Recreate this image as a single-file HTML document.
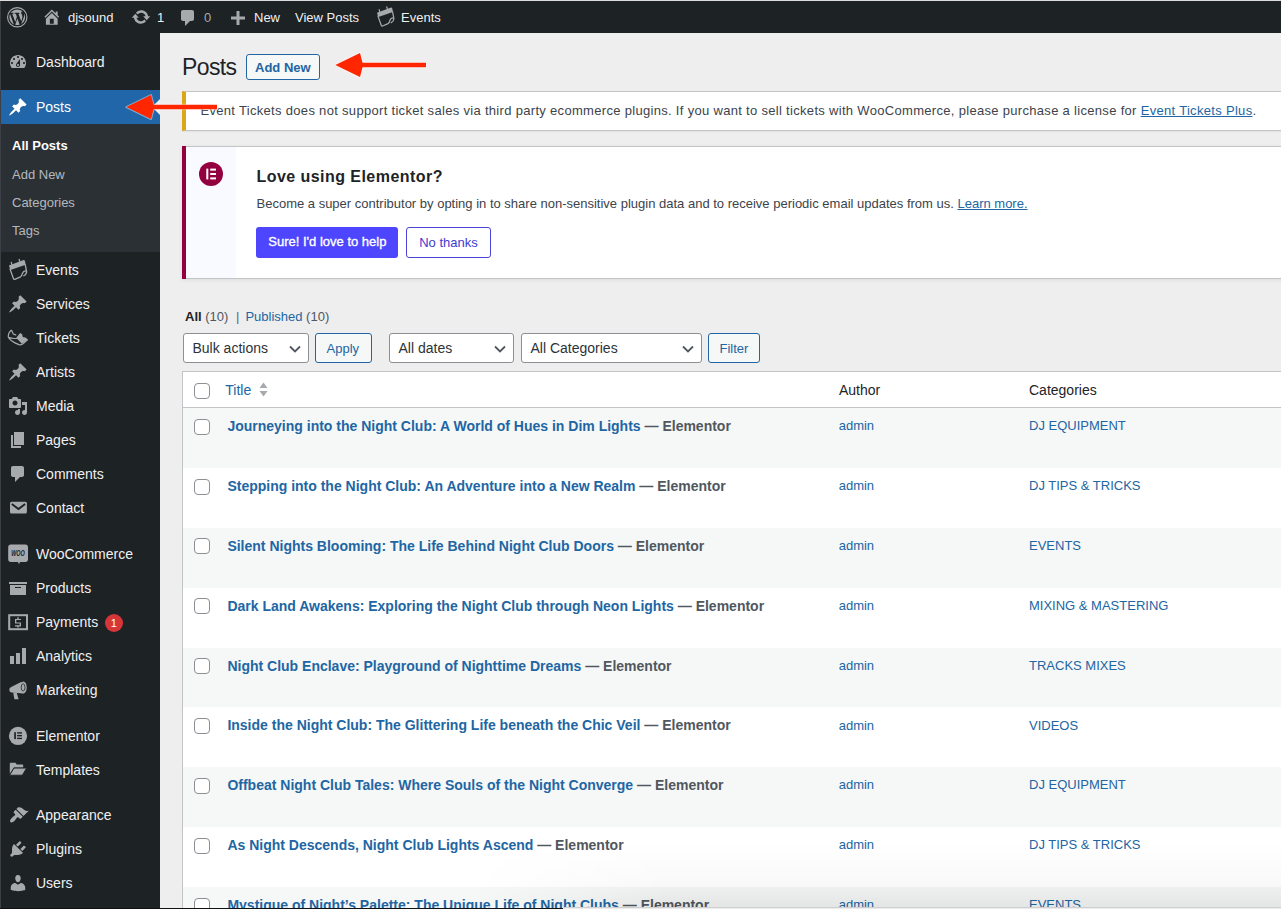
<!DOCTYPE html>
<html><head><meta charset="utf-8"><style>
*{box-sizing:border-box;margin:0;padding:0}
html,body{width:1281px;height:909px;overflow:hidden;background:#eeeeef;font-family:"Liberation Sans",sans-serif;color:#3c434a;font-size:13px;position:relative}
.t{position:absolute;white-space:nowrap}
.b{position:absolute}
svg{position:absolute;overflow:visible}
</style></head><body>
<div class="b" style="left:0;top:0;width:1281px;height:1px;background:#dcdcdc"></div>
<div class="b" style="left:0;top:1px;width:1281px;height:32px;background:#1d2225"></div>
<div class="b" style="left:0;top:33px;width:160px;height:876px;background:#1d2225"></div>
<svg style="left:6.75px;top:6.75px" width="20.5" height="20.5" viewBox="0 0 20 20"><circle cx="10" cy="10" r="9.45" fill="none" stroke="#a7aaad" stroke-width="1.1"/><g transform="translate(10 10) scale(0.86) translate(-10 -10)"><path fill="#a7aaad" d="M7.78 15.37L4.37 6.22c.55-.02 1.17-.08 1.17-.08.5-.06.44-1.13-.06-1.11 0 0-1.45.11-2.37.11-.18 0-.37 0-.58-.01C4.120 2.69 6.87 1.11 10 1.11c2.33 0 4.45.87 6.05 2.34-.68-.11-1.65.39-1.65 1.58 0 .74.45 1.360.9 2.1.35.61.55 1.36.55 2.46 0 1.49-1.4 5-1.4 5l-3.03-8.37c.54-.02.82-.17.82-.17.5-.05.44-1.25-.06-1.22 0 0-1.44.12-2.38.12-.87 0-2.33-.12-2.33-.12-.5-.03-.56 1.2-.06 1.22l.92.08 1.26 3.41zM17.41 10c.24-.64.74-1.87.43-4.25.7 1.29 1.05 2.71 1.05 4.25 0 3.29-1.73 6.24-4.4 7.78.97-2.59 1.94-5.2 2.92-7.780zM6.1 18.09C3.12 16.65 1.11 13.53 1.11 10c0-1.3.23-2.48.72-3.59C3.25 10.3 4.67 14.2 6.1 18.09zm4.03-6.63l2.58 6.98c-.86.29-1.76.45-2.71.45-.79 0-1.57-.11-2.29-.33.81-2.38 1.62-4.74 2.42-7.1z"/></g></svg>
<svg style="left:42.3px;top:7.4px" width="19.6" height="19.6" viewBox="0 0 20 20"><path fill="#a7aaad" d="M16 8.5l1.53 1.53-1.06 1.06L10 4.62l-6.47 6.47-1.06-1.06L10 2.5l4 4v-2h2v4zm-6-2.46l6 5.99V18H4v-5.97zM12 17v-5H8v5h4z"/></svg>
<div class="t" style="left:68px;top:9.00px;font-size:13px;line-height:17px;color:#f0f0f1;">djsound</div>

<svg style="left:131.3px;top:6.6px" width="20" height="20" viewBox="0 0 20 20"><path fill="#a7aaad" d="M10.2 3.28c3.53 0 6.43 2.61 6.92 6h2.08l-3.5 4-3.5-4h2.32c-.45-1.97-2.21-3.45-4.32-3.45-1.45 0-2.73.71-3.54 1.78L4.95 5.66C6.23 4.2 8.11 3.28 10.2 3.28zm-.4 13.44c-3.52 0-6.43-2.61-6.92-6H.8l3.5-4c1.17 1.33 2.33 2.67 3.5 4H5.48c.45 1.97 2.21 3.45 4.32 3.45 1.45 0 2.73-.71 3.54-1.78l1.71 1.95c-1.28 1.46-3.15 2.380-5.25 2.38z"/></svg>
<div class="t" style="left:157px;top:9.00px;font-size:13px;line-height:17px;color:#f0f0f1;">1</div>

<svg style="left:177.9px;top:7.9px" width="20" height="20" viewBox="0 0 20 20"><path fill="#a7aaad" d="M5 2h9c1.1 0 2 .9 2 2v7c0 1.1-.9 2-2 2h-2l-5 5v-5H5c-1.1 0-2-.9-2-2V4c0-1.1.9-2 2-2z"/></svg>
<div class="t" style="left:204px;top:9.00px;font-size:13px;line-height:17px;color:#a7aaad;">0</div>

<svg style="left:231px;top:10.5px" width="14" height="14" viewBox="0 0 14 14"><path fill="#a7aaad" d="M5.5 0h3v5.5H14v3H8.5V14h-3V8.5H0v-3h5.5z"/></svg>
<div class="t" style="left:254px;top:9.00px;font-size:13px;line-height:17px;color:#f0f0f1;">New</div>

<div class="t" style="left:295px;top:9.00px;font-size:13px;line-height:17px;color:#f0f0f1;">View Posts</div>

<svg style="left:371.5px;top:1.5px" width="30" height="30" viewBox="0 0 30 30"><g transform="translate(0.2 -0.3) scale(0.96)"><path fill="#a7aaad" d="M5 11.4L19 6.2Q20.6 5.7 21 7.3L21.6 10.8 6.4 15.9Z"/><path fill="none" stroke="#a7aaad" stroke-width="1.3" stroke-linecap="round" d="M6 15L9.6 25Q10 25.7 10.8 25.3L16.5 22.8Q18 22 18.5 19.2Q19.3 17 21.6 16.8M21.2 10.5L22.6 17.5Q22.6 20.2 19.8 21.8M7.3 8.3L7.8 10.3M15.2 5.3L15.7 7.3"/></g></svg>
<div class="t" style="left:401px;top:9.00px;font-size:13px;line-height:17px;color:#f0f0f1;">Events</div>

<div class="b" style="left:0;top:90px;width:160px;height:34px;background:#2166a8"></div>
<div class="b" style="left:0;top:124px;width:160px;height:128px;background:#2b3034"></div>
<svg style="left:8px;top:51.599999999999994px;fill:#a7aaad" width="20" height="20" viewBox="0 0 20 20"><path fill-rule="evenodd" d="M3.76 16h12.48c1.1-1.37 1.76-3.11 1.76-5 0-4.42-3.58-8-8-8s-8 3.58-8 8c0 1.89.66 3.630 1.76 5zM10 4c.55 0 1 .45 1 1s-.45 1-1 1-1-.45-1-1 .45-1 1-1zM6 6c.55 0 1 .45 1 1s-.45 1-1 1-1-.45-1-1 .45-1 1-1zm8 0c.55 0 1 .45 1 1s-.45 1-1 1-1-.45-1-1 .45-1 1-1zm-5.37 5.55L12 7v6c0 1.1-.9 2-2 2s-2-.9-2-2c0-.57.24-1.08.63-1.45zM4 10c.55 0 1 .45 1 1s-.45 1-1 1-1-.45-1-1 .45-1 1-1zm12 0c.55 0 1 .45 1 1s-.45 1-1 1-1-.45-1-1 .45-1 1-1zm-5 3c0-.55-.45-1-1-1s-1 .45-1 1 .45 1 1 1 1-.45 1-1z"/></svg>
<div class="t" style="left:36px;top:53.45px;font-size:14px;line-height:18px;color:#f0f0f1;">Dashboard</div>

<svg style="left:8px;top:96.9px;fill:#fff" width="20" height="20" viewBox="0 0 20 20"><path d="M10.44 3.02l1.82-1.82 6.36 6.35-1.83 1.82c-1.05-.68-2.48-.57-3.41.36l-.75.75c-.92.93-1.040 2.35-.35 3.41l-1.83 1.82-2.41-2.41-2.8 2.79c-.42.42-3.38 2.71-3.8 2.29s1.86-3.39 2.28-3.81l2.79-2.79L4.1 9.36l1.83-1.82c1.05.69 2.48.57 3.4-.36l.75-.75c.93-.92 1.05-2.35.36-3.41z"/></svg>
<div class="t" style="left:36px;top:98.05px;font-size:14px;line-height:18px;color:#fff;">Posts</div>

<svg style="left:4px;top:254px" width="30" height="30" viewBox="0 0 30 30"><path fill="#a7aaad" d="M5 11.4L19 6.2Q20.6 5.7 21 7.3L21.6 10.8 6.4 15.9Z"/><path fill="none" stroke="#a7aaad" stroke-width="1.3" stroke-linecap="round" d="M6 15L9.6 25Q10 25.7 10.8 25.3L16.5 22.8Q18 22 18.5 19.2Q19.3 17 21.6 16.8M21.2 10.5L22.6 17.5Q22.6 20.2 19.8 21.8M7.3 8.3L7.8 10.3M15.2 5.3L15.7 7.3"/></svg>
<div class="t" style="left:36px;top:261.15px;font-size:14px;line-height:18px;color:#f0f0f1;">Events</div>

<svg style="left:8px;top:293.5px;fill:#a7aaad" width="20" height="20" viewBox="0 0 20 20"><path d="M10.44 3.02l1.82-1.82 6.36 6.35-1.83 1.82c-1.05-.68-2.48-.57-3.41.36l-.75.75c-.92.93-1.040 2.35-.35 3.41l-1.83 1.82-2.41-2.41-2.8 2.79c-.42.42-3.38 2.71-3.8 2.29s1.86-3.39 2.28-3.81l2.79-2.79L4.1 9.36l1.83-1.82c1.05.69 2.48.57 3.4-.36l.75-.75c.93-.92 1.05-2.35.36-3.41z"/></svg>
<div class="t" style="left:36px;top:294.65px;font-size:14px;line-height:18px;color:#f0f0f1;">Services</div>

<svg style="left:4px;top:324px" width="30" height="30" viewBox="0 0 30 30"><path fill="none" stroke="#a7aaad" stroke-width="1.2" stroke-linejoin="round" d="M7.4 6Q4 9 4.3 13Q6 17.2 15 20.6Q17.4 21.2 19 19.8L23.7 15.5M4.6 13.4Q9 15 12.6 14.3L16.6 9.4M7.4 6L9.3 10Q10.8 10.8 12.2 10.9"/><path fill="#a7aaad" d="M12.6 14.3L16.6 9.2L18.4 10.5Q18 12.8 19.3 13.2Q20.8 13 21.5 13.6L23.8 15.5L17.8 19.8Z"/></svg>
<div class="t" style="left:36px;top:329.15px;font-size:14px;line-height:18px;color:#f0f0f1;">Tickets</div>

<svg style="left:8px;top:362px;fill:#a7aaad" width="20" height="20" viewBox="0 0 20 20"><path d="M10.44 3.02l1.82-1.82 6.36 6.35-1.83 1.82c-1.05-.68-2.48-.57-3.41.36l-.75.75c-.92.93-1.040 2.35-.35 3.41l-1.83 1.82-2.41-2.41-2.8 2.79c-.42.42-3.38 2.71-3.8 2.29s1.86-3.39 2.28-3.81l2.79-2.79L4.1 9.36l1.83-1.82c1.05.69 2.48.57 3.4-.36l.75-.75c.93-.92 1.05-2.35.36-3.41z"/></svg>
<div class="t" style="left:36px;top:363.15px;font-size:14px;line-height:18px;color:#f0f0f1;">Artists</div>

<svg style="left:8px;top:395.8px;fill:#a7aaad" width="20" height="20" viewBox="0 0 20 20"><path d="M13 11V4c0-.55-.45-1-1-1h-1.67L9 1H5L3.67 3H2c-.55 0-1 .45-1 1v7c0 .55.45 1 1 1h10c.55 0 1-.45 1-1zM7 4.5c1.38 0 2.5 1.12 2.5 2.5S8.38 9.5 7 9.5 4.5 8.38 4.5 7 5.62 4.5 7 4.5zM14 6h5v10.5c0 1.38-1.12 2.5-2.5 2.5S14 17.88 14 16.5s1.12-2.5 2.5-2.5c.17 0 .34.02.5.05V9h-3V6zm-4 8.05V13h2v3.5c0 1.38-1.12 2.5-2.5 2.5S7 17.88 7 16.5 8.12 14 9.5 14c.17 0 .34.02.5.05z"/></svg>
<div class="t" style="left:36px;top:397.15px;font-size:14px;line-height:18px;color:#f0f0f1;">Media</div>

<svg style="left:7.8px;top:429.8px;fill:#a7aaad" width="20" height="20" viewBox="0 0 20 20"><path d="M6 15V2h10v13H6zm-1 1h8v2H3V5h2v11z"/></svg>
<div class="t" style="left:36px;top:431.15px;font-size:14px;line-height:18px;color:#f0f0f1;">Pages</div>

<svg style="left:8.1px;top:463.8px;fill:#a7aaad" width="20" height="20" viewBox="0 0 20 20"><path d="M5 2h9c1.1 0 2 .9 2 2v7c0 1.1-.9 2-2 2h-2l-5 5v-5H5c-1.1 0-2-.9-2-2V4c0-1.1.9-2 2-2z"/></svg>
<div class="t" style="left:36px;top:465.15px;font-size:14px;line-height:18px;color:#f0f0f1;">Comments</div>

<svg style="left:8px;top:498.29999999999995px" width="20" height="20" viewBox="0 0 20 20"><rect x="2" y="3.7" width="16.9" height="11.9" rx="1.6" fill="#a7aaad"/><path d="M3.8 6L10.5 11.1 17.1 6" stroke="#1d2225" stroke-width="1.9" fill="none"/></svg>
<div class="t" style="left:36px;top:499.45px;font-size:14px;line-height:18px;color:#f0f0f1;">Contact</div>

<svg style="left:8px;top:543.6px" width="20" height="20" viewBox="0 0 20 20"><path fill="#a7aaad" d="M2.7 .4h14.8c1.4 0 2.5 1.1 2.5 2.5v12.6c0 1.4-1.1 2.5-2.5 2.5h-5.4l-1.1 2.2-1-2.2H2.7C1.3 18 .2 16.9.2 15.5V2.9C.2 1.5 1.3.4 2.7.4z"/><text x="10" y="12" font-family="Liberation Sans" font-size="8.6" font-weight="bold" font-style="italic" textLength="13.6" lengthAdjust="spacingAndGlyphs" text-anchor="middle" fill="#1d2225">WOO</text></svg>
<div class="t" style="left:36px;top:544.75px;font-size:14px;line-height:18px;color:#f0f0f1;">WooCommerce</div>

<svg style="left:8px;top:578.0px;fill:#a7aaad" width="20" height="20" viewBox="0 0 20 20"><path d="M19 4v2H1V4h18zM2 7h16v10H2V7zm11 3V9H7v1h6z"/></svg>
<div class="t" style="left:36px;top:578.85px;font-size:14px;line-height:18px;color:#f0f0f1;">Products</div>

<svg style="left:8px;top:611.6px" width="20" height="20" viewBox="0 0 20 20"><rect x="1.2" y="3.2" width="17.8" height="14" fill="none" stroke="#a7aaad" stroke-width="2"/><path fill="#a7aaad" d="M7 6.9h6v1.2H8.3v2.3H13v4H7v-1.2h4.7v-1.6H7zM9.3 5.3h1.4v1.6H9.3zM9.3 14.4h1.4v1.2H9.3z"/></svg>
<div class="t" style="left:36px;top:612.75px;font-size:14px;line-height:18px;color:#f0f0f1;">Payments</div>

<svg style="left:8px;top:645.7px;fill:#a7aaad" width="20" height="20" viewBox="0 0 20 20"><path d="M18 18V2h-4v16h4zm-6 0V7H8v11h4zm-6 0v-8H2v8h4z"/></svg>
<div class="t" style="left:36px;top:646.75px;font-size:14px;line-height:18px;color:#f0f0f1;">Analytics</div>

<svg style="left:8px;top:679.7px" width="20" height="20" viewBox="0 0 20 20"><path fill="#a7aaad" d="M1.3 9.8Q1.3 7.6 3.2 7L13.6 1.8 15.2 13.4 3.4 12.6Q1.3 12.2 1.3 9.8Z"/><ellipse cx="15.4" cy="7.5" rx="3.3" ry="6" fill="#a7aaad"/><ellipse cx="15.1" cy="7.4" rx="1.9" ry="3.6" fill="none" stroke="#1d2225" stroke-width=".8"/><ellipse cx="15.1" cy="7.4" rx=".9" ry="1.5" fill="#a7aaad"/><path fill="#a7aaad" d="M5.2 12.6L8.8 12.9 10.6 19.2 6.4 19.2Z"/></svg>
<div class="t" style="left:36px;top:680.85px;font-size:14px;line-height:18px;color:#f0f0f1;">Marketing</div>

<svg style="left:8px;top:725.7px" width="20" height="20" viewBox="0 0 20 20"><circle cx="10" cy="9.95" r="9.1" fill="#a7aaad"/><rect x="6.2" y="6.2" width="1.7" height="6.9" fill="#1d2225"/><rect x="9.1" y="6.2" width="4.9" height="1.4" fill="#1d2225"/><rect x="9.1" y="8.95" width="4.9" height="1.4" fill="#1d2225"/><rect x="9.1" y="11.7" width="4.9" height="1.4" fill="#1d2225"/></svg>
<div class="t" style="left:36px;top:726.85px;font-size:14px;line-height:18px;color:#f0f0f1;">Elementor</div>

<svg style="left:8px;top:760px" width="20" height="20" viewBox="0 0 20 20"><path fill="#a7aaad" d="M1.8 3.5Q1.8 2.7 2.6 2.7H7.5L8.7 4.4H14.4Q15.2 4.4 15.2 5.2V7.6H5.8L1.8 13.8Z"/><path fill="#a7aaad" stroke="#1d2225" stroke-width=".9" d="M6 8.1H18.6L14.3 15.2H1.6Z"/></svg>
<div class="t" style="left:36px;top:761.15px;font-size:14px;line-height:18px;color:#f0f0f1;">Templates</div>

<svg style="left:8.5px;top:804.6px;fill:#a7aaad" width="20" height="20" viewBox="0 0 20 20"><path d="M14.48 11.06L7.41 3.99l1.5-1.5c.5-.56 2.3-.47 3.51.32 1.21.8 1.43 1.28 2.91 2.1 1.18.64 2.45 1.26 4.45.85zm-.71.71L6.7 4.7 4.93 6.47c-.39.39-.39 1.02 0 1.41l1.06 1.06c.39.39.39 1.03 0 1.42-.6.6-1.43 1.110-2.21 1.69-.35.26-.7.53-1.01.84C1.43 14.23.4 16.080 1.4 17.070c.99 1 2.84-.03 4.18-1.36.31-.31.58-.66.85-1.02.57-.78 1.08-1.61 1.69-2.21.39-.39 1.02-.39 1.41 0l1.06 1.06c.39.39 1.02.39 1.41 0z"/></svg>
<div class="t" style="left:36px;top:805.75px;font-size:14px;line-height:18px;color:#f0f0f1;">Appearance</div>

<svg style="left:7.8px;top:838.7px;fill:#a7aaad" width="20" height="20" viewBox="0 0 20 20"><path d="M13.11 4.36L9.87 7.6 8 5.73l3.24-3.24c.35-.34 1.05-.2 1.56.32.52.51.66 1.21.31 1.55zm-8 1.77l.91-1.12 9.01 9.01-1.19.84c-.71.71-2.63 1.16-3.82 1.16H6.14L4.9 17.26c-.59.59-1.54.59-2.12 0-.59-.58-.59-1.53 0-2.12l1.24-1.240v-3.88c0-1.13.4-3.19 1.09-3.89zm7.26 3.97l3.24-3.24c.34-.35 1.04-.21 1.55.31.52.51.66 1.21.31 1.55l-3.24 3.25z"/></svg>
<div class="t" style="left:36px;top:839.75px;font-size:14px;line-height:18px;color:#f0f0f1;">Plugins</div>

<svg style="left:8px;top:872.7px;fill:#a7aaad" width="20" height="20" viewBox="0 0 20 20"><path d="M10 9.25c-2.27 0-2.73-3.44-2.73-3.44C7 4.02 7.820 2 9.97 2c2.16 0 2.98 2.020 2.71 3.81 0 0-.41 3.44-2.68 3.44zm0 2.57L12.72 10c2.39 0 4.52 2.33 4.52 4.53v2.49s-3.65 1.13-7.24 1.13c-3.65 0-7.24-1.13-7.24-1.130v-2.49c0-2.25 1.94-4.48 4.47-4.48z"/></svg>
<div class="t" style="left:36px;top:873.65px;font-size:14px;line-height:18px;color:#f0f0f1;">Users</div>

<div class="b" style="left:105px;top:614px;width:18px;height:18px;border-radius:9px;background:#d63638"></div>
<div class="t" style="left:110.8px;top:616.29px;font-size:11px;line-height:14px;color:#fff;">1</div>

<div class="t" style="left:12px;top:137.00px;font-size:13px;line-height:17px;color:#fff;font-weight:bold;">All Posts</div>

<div class="t" style="left:12px;top:166.00px;font-size:13px;line-height:17px;color:rgba(240,246,252,.7);">Add New</div>

<div class="t" style="left:12px;top:194.00px;font-size:13px;line-height:17px;color:rgba(240,246,252,.7);">Categories</div>

<div class="t" style="left:12px;top:222.00px;font-size:13px;line-height:17px;color:rgba(240,246,252,.7);">Tags</div>

<div class="t" style="left:182px;top:52.23px;font-size:23px;line-height:30px;color:#1d2327;letter-spacing:-0.6px;">Posts</div>

<div class="b" style="left:246px;top:54px;width:74px;height:26px;border:1px solid #2166a3;border-radius:3px;background:#f6f7f7"></div>
<div class="t" style="left:255px;top:58.90px;font-size:13px;line-height:17px;color:#2166a3;font-weight:bold;">Add New</div>

<div class="b" style="left:182px;top:91px;width:1200px;height:40px;background:#fff;border:1px solid #c3c4c7;border-left:4px solid #dba617;box-shadow:0 1px 1px rgba(0,0,0,.04)"></div>
<div class="t" style="left:200.5px;top:101.80px;font-size:13px;line-height:17px;color:#3c434a;letter-spacing:0.31px;">Event Tickets does not support ticket sales via third party ecommerce plugins. If you want to sell tickets with WooCommerce, please purchase a license for <span style="color:#2166a3;text-decoration:underline">Event Tickets Plus</span>.</div>

<div class="b" style="left:182px;top:146px;width:1200px;height:133px;background:#fff;border:1px solid #c3c4c7;border-left:none;box-shadow:0 1px 4px rgba(0,0,0,.08)"></div>
<div class="b" style="left:182px;top:146px;width:4px;height:133px;background:#93003f"></div>
<div class="b" style="left:186px;top:147px;width:50px;height:131px;background:#f9faff"></div>
<svg style="left:199px;top:162px" width="24" height="24" viewBox="0 0 24 24"><circle cx="12" cy="12" r="12" fill="#93003f"/><rect x="7.3" y="6.6" width="2" height="10.8" fill="#fff"/><rect x="11.2" y="6.6" width="5.8" height="2" fill="#fff"/><rect x="11.2" y="11" width="5.8" height="2" fill="#fff"/><rect x="11.2" y="15.4" width="5.8" height="2" fill="#fff"/></svg>
<div class="t" style="left:256.5px;top:166.16px;font-size:16px;line-height:21px;color:#1d2327;font-weight:bold;letter-spacing:0.45px;">Love using Elementor?</div>

<div class="t" style="left:256.5px;top:194.80px;font-size:13px;line-height:17px;color:#3c434a;">Become a super contributor by opting in to share non-sensitive plugin data and to receive periodic email updates from us. <span style="color:#2166a3;text-decoration:underline">Learn more.</span></div>

<div class="b" style="left:256px;top:227px;width:142px;height:31px;border-radius:3px;background:#4e46ff"></div>
<div class="t" style="left:268.3px;top:233.00px;font-size:13px;line-height:17px;color:#fff;-webkit-text-stroke:0.35px #fff;">Sure! I'd love to help</div>

<div class="b" style="left:406px;top:227px;width:85px;height:31px;border-radius:3px;border:1px solid #4a44d8;background:#fff"></div>
<div class="t" style="left:419.2px;top:234.00px;font-size:13px;line-height:17px;color:#413bd0;">No thanks</div>

<div class="t" style="left:185px;top:307.60px;font-size:13px;line-height:17px;"><b style="color:#1d2327">All</b> <span style="color:#50575e">(10)</span></div>

<div class="t" style="left:236px;top:307.60px;font-size:13px;line-height:17px;color:#646970;">|</div>

<div class="t" style="left:245.4px;top:307.60px;font-size:13px;line-height:17px;color:#2166a3;">Published <span style="color:#50575e">(10)</span></div>

<div class="b" style="left:183px;top:333px;width:126px;height:30px;border:1px solid #8c8f94;border-radius:3px;background:#fff"></div>
<div class="t" style="left:192.5px;top:338.75px;font-size:14px;line-height:18px;color:#2c3338;">Bulk actions</div>

<svg style="left:289px;top:345px" width="12" height="8" viewBox="0 0 12 8"><path d="M1 1.5l5 5 5-5" fill="none" stroke="#50575e" stroke-width="1.8"/></svg>
<div class="b" style="left:315px;top:333px;width:57px;height:30px;border:1px solid #2166a3;border-radius:3px;background:#f6f7f7"></div>
<div class="t" style="left:326.5px;top:339.60px;font-size:13px;line-height:17px;color:#2166a3;">Apply</div>

<div class="b" style="left:389px;top:333px;width:125px;height:30px;border:1px solid #8c8f94;border-radius:3px;background:#fff"></div>
<div class="t" style="left:398.5px;top:338.75px;font-size:14px;line-height:18px;color:#2c3338;">All dates</div>

<svg style="left:494px;top:345px" width="12" height="8" viewBox="0 0 12 8"><path d="M1 1.5l5 5 5-5" fill="none" stroke="#50575e" stroke-width="1.8"/></svg>
<div class="b" style="left:521px;top:333px;width:181px;height:30px;border:1px solid #8c8f94;border-radius:3px;background:#fff"></div>
<div class="t" style="left:530.5px;top:338.75px;font-size:14px;line-height:18px;color:#2c3338;">All Categories</div>

<svg style="left:682px;top:345px" width="12" height="8" viewBox="0 0 12 8"><path d="M1 1.5l5 5 5-5" fill="none" stroke="#50575e" stroke-width="1.8"/></svg>
<div class="b" style="left:708px;top:333px;width:52px;height:30px;border:1px solid #2166a3;border-radius:3px;background:#f6f7f7"></div>
<div class="t" style="left:719.5px;top:339.60px;font-size:13px;line-height:17px;color:#2166a3;">Filter</div>

<div class="b" style="left:182px;top:371px;width:1200px;height:540px;background:#fff;border:1px solid #c3c4c7;border-right:none;border-bottom:none"></div>
<div class="b" style="left:183px;top:407px;width:1200px;height:1px;background:#c3c4c7"></div>
<div class="b" style="left:194px;top:383px;width:16px;height:16px;border:1px solid #8c8f94;border-radius:4px;background:#fff"></div>
<div class="t" style="left:225.3px;top:381.35px;font-size:14px;line-height:18px;color:#2166a3;">Title</div>

<svg style="left:259px;top:382px" width="9" height="15" viewBox="0 0 9 15"><path d="M4.5 0.5L8.5 6H.5zM4.5 14.5L.5 9h8z" fill="#a7aaad"/></svg>
<div class="t" style="left:839px;top:381.25px;font-size:14px;line-height:18px;color:#1d2327;">Author</div>

<div class="t" style="left:1029px;top:381.25px;font-size:14px;line-height:18px;color:#1d2327;">Categories</div>

<div class="b" style="left:183px;top:408.0px;width:1100px;height:59.87px;background:#f6f7f7"></div>
<div class="b" style="left:194px;top:419px;width:16px;height:16px;border:1px solid #8c8f94;border-radius:4px;background:#fff"></div>
<div class="t" style="left:227.4px;top:417.05px;font-size:14px;line-height:18px;color:#2166a3;font-weight:bold;">Journeying into the Night Club: A World of Hues in Dim Lights <span style="color:#50575e">&#8212; Elementor</span></div>

<div class="t" style="left:838.7px;top:417.20px;font-size:13px;line-height:17px;color:#2166a3;">admin</div>

<div class="t" style="left:1029px;top:417.20px;font-size:13px;line-height:17px;color:#2166a3;">DJ EQUIPMENT</div>

<div class="b" style="left:194px;top:479px;width:16px;height:16px;border:1px solid #8c8f94;border-radius:4px;background:#fff"></div>
<div class="t" style="left:227.4px;top:476.92px;font-size:14px;line-height:18px;color:#2166a3;font-weight:bold;">Stepping into the Night Club: An Adventure into a New Realm <span style="color:#50575e">&#8212; Elementor</span></div>

<div class="t" style="left:838.7px;top:477.07px;font-size:13px;line-height:17px;color:#2166a3;">admin</div>

<div class="t" style="left:1029px;top:477.07px;font-size:13px;line-height:17px;color:#2166a3;">DJ TIPS &amp; TRICKS</div>

<div class="b" style="left:183px;top:527.7px;width:1100px;height:59.87px;background:#f6f7f7"></div>
<div class="b" style="left:194px;top:538px;width:16px;height:16px;border:1px solid #8c8f94;border-radius:4px;background:#fff"></div>
<div class="t" style="left:227.4px;top:536.79px;font-size:14px;line-height:18px;color:#2166a3;font-weight:bold;">Silent Nights Blooming: The Life Behind Night Club Doors <span style="color:#50575e">&#8212; Elementor</span></div>

<div class="t" style="left:838.7px;top:536.94px;font-size:13px;line-height:17px;color:#2166a3;">admin</div>

<div class="t" style="left:1029px;top:536.94px;font-size:13px;line-height:17px;color:#2166a3;">EVENTS</div>

<div class="b" style="left:194px;top:598px;width:16px;height:16px;border:1px solid #8c8f94;border-radius:4px;background:#fff"></div>
<div class="t" style="left:227.4px;top:596.66px;font-size:14px;line-height:18px;color:#2166a3;font-weight:bold;">Dark Land Awakens: Exploring the Night Club through Neon Lights <span style="color:#50575e">&#8212; Elementor</span></div>

<div class="t" style="left:838.7px;top:596.81px;font-size:13px;line-height:17px;color:#2166a3;">admin</div>

<div class="t" style="left:1029px;top:596.81px;font-size:13px;line-height:17px;color:#2166a3;">MIXING &amp; MASTERING</div>

<div class="b" style="left:183px;top:647.5px;width:1100px;height:59.87px;background:#f6f7f7"></div>
<div class="b" style="left:194px;top:658px;width:16px;height:16px;border:1px solid #8c8f94;border-radius:4px;background:#fff"></div>
<div class="t" style="left:227.4px;top:656.53px;font-size:14px;line-height:18px;color:#2166a3;font-weight:bold;">Night Club Enclave: Playground of Nighttime Dreams <span style="color:#50575e">&#8212; Elementor</span></div>

<div class="t" style="left:838.7px;top:656.68px;font-size:13px;line-height:17px;color:#2166a3;">admin</div>

<div class="t" style="left:1029px;top:656.68px;font-size:13px;line-height:17px;color:#2166a3;">TRACKS MIXES</div>

<div class="b" style="left:194px;top:718px;width:16px;height:16px;border:1px solid #8c8f94;border-radius:4px;background:#fff"></div>
<div class="t" style="left:227.4px;top:716.40px;font-size:14px;line-height:18px;color:#2166a3;font-weight:bold;">Inside the Night Club: The Glittering Life beneath the Chic Veil <span style="color:#50575e">&#8212; Elementor</span></div>

<div class="t" style="left:838.7px;top:716.55px;font-size:13px;line-height:17px;color:#2166a3;">admin</div>

<div class="t" style="left:1029px;top:716.55px;font-size:13px;line-height:17px;color:#2166a3;">VIDEOS</div>

<div class="b" style="left:183px;top:767.2px;width:1100px;height:59.87px;background:#f6f7f7"></div>
<div class="b" style="left:194px;top:778px;width:16px;height:16px;border:1px solid #8c8f94;border-radius:4px;background:#fff"></div>
<div class="t" style="left:227.4px;top:776.27px;font-size:14px;line-height:18px;color:#2166a3;font-weight:bold;">Offbeat Night Club Tales: Where Souls of the Night Converge <span style="color:#50575e">&#8212; Elementor</span></div>

<div class="t" style="left:838.7px;top:776.42px;font-size:13px;line-height:17px;color:#2166a3;">admin</div>

<div class="t" style="left:1029px;top:776.42px;font-size:13px;line-height:17px;color:#2166a3;">DJ EQUIPMENT</div>

<div class="b" style="left:194px;top:838px;width:16px;height:16px;border:1px solid #8c8f94;border-radius:4px;background:#fff"></div>
<div class="t" style="left:227.4px;top:836.14px;font-size:14px;line-height:18px;color:#2166a3;font-weight:bold;">As Night Descends, Night Club Lights Ascend <span style="color:#50575e">&#8212; Elementor</span></div>

<div class="t" style="left:838.7px;top:836.29px;font-size:13px;line-height:17px;color:#2166a3;">admin</div>

<div class="t" style="left:1029px;top:836.29px;font-size:13px;line-height:17px;color:#2166a3;">DJ TIPS &amp; TRICKS</div>

<div class="b" style="left:183px;top:887.0px;width:1100px;height:59.87px;background:#f6f7f7"></div>
<div class="b" style="left:194px;top:898px;width:16px;height:16px;border:1px solid #8c8f94;border-radius:4px;background:#fff"></div>
<div class="t" style="left:227.4px;top:896.01px;font-size:14px;line-height:18px;color:#2166a3;font-weight:bold;">Mystique of Night&#8217;s Palette: The Unique Life of Night Clubs <span style="color:#50575e">&#8212; Elementor</span></div>

<div class="t" style="left:838.7px;top:896.16px;font-size:13px;line-height:17px;color:#2166a3;">admin</div>

<div class="t" style="left:1029px;top:896.16px;font-size:13px;line-height:17px;color:#2166a3;">EVENTS</div>

<div class="b" style="left:0;top:1px;width:1px;height:908px;background:#3c4046"></div>
<div class="b" style="left:470px;top:842px;width:811px;height:65px;background:linear-gradient(to bottom,rgba(0,0,0,0) 0%,rgba(0,0,0,.025) 65%,rgba(0,0,0,.07) 100%);-webkit-mask-image:linear-gradient(to right,transparent 0,#000 200px)"></div>
<div class="b" style="left:563px;top:907px;width:718px;height:1px;background:#cfcfcf"></div>
<div class="b" style="left:563px;top:908px;width:718px;height:1px;background:#ececec"></div>
<div class="b" style="left:0;top:908px;width:563px;height:1px;background:#111"></div>
<svg style="left:150px;top:97px" width="10" height="20" viewBox="0 0 10 20"><path d="M10 2L2 10 10 18Z" fill="#f0f0f1"/></svg>
<svg style="left:0;top:0" width="1281" height="909" viewBox="0 0 1281 909"><path d="M126.4 107.1 L151 95.1 L153.5 104.85 L217 104.85 L217 109.35 L153.5 109.35 L151 119.1 Z" fill="none" stroke="rgba(255,255,255,.45)" stroke-width="2" stroke-linejoin="round"/><path d="M126.4 107.1 L151 95.1 L153.5 104.85 L217 104.85 L217 109.35 L153.5 109.35 L151 119.1 Z" fill="#ff2600"/></svg>
<svg style="left:0;top:0" width="1281" height="909" viewBox="0 0 1281 909"><path d="M335.3 65 L360 53 L362.5 62.75 L426 62.75 L426 67.25 L362.5 67.25 L360 77 Z" fill="none" stroke="rgba(255,255,255,.45)" stroke-width="2" stroke-linejoin="round"/><path d="M335.3 65 L360 53 L362.5 62.75 L426 62.75 L426 67.25 L362.5 67.25 L360 77 Z" fill="#ff2600"/></svg>
</body></html>
